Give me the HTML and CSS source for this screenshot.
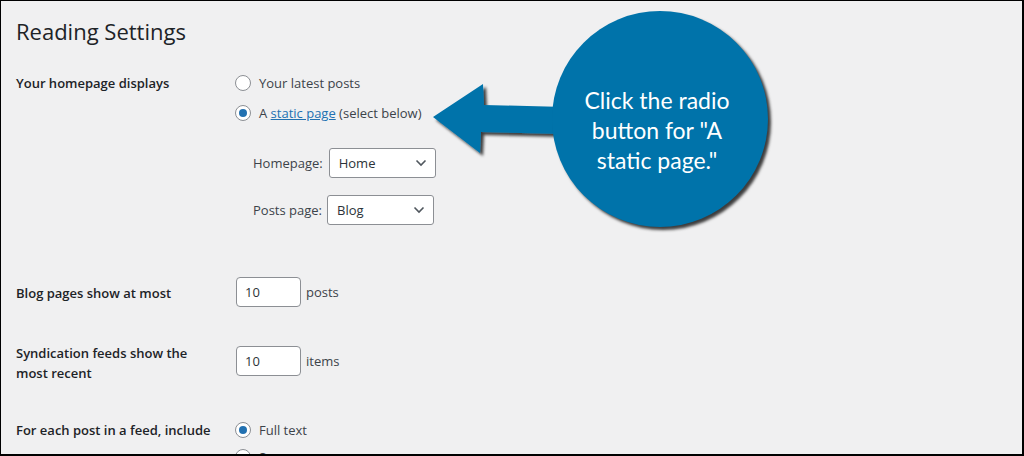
FILE: index.html
```html
<!DOCTYPE html>
<html lang="en">
<head>
<meta charset="utf-8">
<title>Reading Settings</title>
<link rel="stylesheet" href="styles.css">
</head>
<body>
<div class="frame">
  <div class="wrap">
    <h1 class="title">Reading Settings</h1>

    <div class="row row-home">
      <div class="th">Your homepage displays</div>
      <div class="td">
        <label class="radio-line"><span class="radio"></span>Your latest posts</label>
        <label class="radio-line"><span class="radio checked"></span>A&nbsp;<a href="#" class="link">static page</a>&nbsp;(select below)</label>
        <div class="sub">
          <div class="sub-line sub-home">
            <span class="sub-label">Homepage:</span>
            <span class="select sel-home">Home<svg class="chev" viewBox="0 0 12 8"><path d="M1.5 1.5 L6 6 L10.5 1.5" fill="none" stroke="#50575e" stroke-width="1.6"/></svg></span>
          </div>
          <div class="sub-line sub-posts">
            <span class="sub-label">Posts page:</span>
            <span class="select sel-posts">Blog<svg class="chev" viewBox="0 0 12 8"><path d="M1.5 1.5 L6 6 L10.5 1.5" fill="none" stroke="#50575e" stroke-width="1.6"/></svg></span>
          </div>
        </div>
      </div>
    </div>

    <div class="row row-blog">
      <div class="th th-input">Blog pages show at most</div>
      <div class="td td-input"><span class="num">10</span><span class="unit">posts</span></div>
    </div>

    <div class="row row-feed">
      <div class="th th-two">Syndication feeds show the most recent</div>
      <div class="td td-input"><span class="num">10</span><span class="unit">items</span></div>
    </div>

    <div class="row row-each">
      <div class="th">For each post in a feed, include</div>
      <div class="td">
        <label class="radio-line"><span class="radio checked"></span>Full text</label>
        <label class="radio-line tight"><span class="radio"></span>Summary</label>
      </div>
    </div>
  </div>

  <svg class="arrow" viewBox="0 0 1024 456" width="1024" height="456">
    <defs>
      <filter id="sh" x="-20%" y="-20%" width="150%" height="150%">
        <feDropShadow dx="3" dy="3" stdDeviation="1.6" flood-color="#000" flood-opacity="0.75"/>
      </filter>
    </defs>
    <polygon points="433,117 483,84 484,105 565,107 565,134 481,132 480,153" fill="#0073aa" filter="url(#sh)"/>
  </svg>
  <div class="bubble">Click the radio<br>button for "A<br>static page."</div>
</div>
</body>
</html>
```

FILE: styles.css
```css
* { box-sizing: border-box; }
html, body { margin: 0; padding: 0; background: #000; }
.frame {
  position: relative;
  width: 1024px;
  height: 456px;
  overflow: hidden;
  background: #f0f0f1;
  border-style: solid;
  border-color: #000;
  border-width: 1px 2px 2px 1px;
  font-family: "Open Sans", "Noto Sans", sans-serif;
  font-size: 13px;
  color: #3c434a;
}
.wrap { padding-left: 15px; }
.title {
  margin: 15px 0 0;
  font-size: 22px;
  line-height: 30px;
  font-weight: 400;
  color: #1d2327;
}
.row { display: grid; grid-template-columns: 220px 1fr; }
.th {
  font-weight: 600;
  color: #1d2327;
  line-height: 20px;
  padding-right: 10px;
}
.td { display: flex; flex-direction: column; }
.row-home { margin-top: 27px; }
.radio-line { display: flex; align-items: center; height: 20px; line-height: 20px; margin-left: -1px; }
.radio-line + .radio-line { margin-top: 10px; }
.radio-line.tight { margin-top: 7px; }
.radio {
  width: 16px; height: 16px;
  border: 1px solid #8c8f94;
  border-radius: 50%;
  background: #fff;
  margin-right: 8px;
  position: relative;
  flex: none;
}
.radio.checked::after {
  content: "";
  position: absolute;
  left: 3px; top: 3px;
  width: 8px; height: 8px;
  border-radius: 50%;
  background: #2271b1;
}
.link { color: #2271b1; text-decoration: underline; }
.sub { padding-left: 17px; margin-top: 25px; display: flex; flex-direction: column; gap: 17px; }
.sub-line { display: flex; align-items: center; }
.sub-label { margin-right: 6px; }
.sub-posts .sub-label { margin-right: 5px; }
.select {
  display: flex; align-items: center; justify-content: space-between;
  width: 107px; height: 30px;
  padding: 0 8px 0 9px;
  background: #fff;
  border: 1px solid #8c8f94;
  border-radius: 3px;
  color: #2c3338;
}
.chev { width: 12px; height: 8px; }
.row-blog { margin-top: 52px; }
.th-input { padding-top: 6px; }
.td-input { flex-direction: row; align-items: center; align-self: start; }
.num {
  display: flex; align-items: center;
  width: 65px; height: 30px;
  padding-left: 8px;
  background: #fff;
  border: 1px solid #8c8f94;
  border-radius: 4px;
  color: #2c3338;
  margin-right: 5px;
}
.row-feed { margin-top: 39px; }
.th-two { margin-top: -3px; padding-right: 20px; }
.row-each { margin-top: 37px; }

.arrow { position: absolute; left: -1px; top: -1px; pointer-events: none; }
.bubble {
  position: absolute;
  left: 551px; top: 10px;
  width: 216px; height: 216px;
  border-radius: 50%;
  background: #0073aa;
  box-shadow: 3px 3px 3px rgba(0,0,0,0.75);
  color: #fff;
  font-family: Lato, "Open Sans", sans-serif;
  font-size: 23px;
  line-height: 30px;
  text-align: center;
  display: flex; align-items: center; justify-content: center;
  padding-top: 22px;
  padding-right: 6px;
}
```
